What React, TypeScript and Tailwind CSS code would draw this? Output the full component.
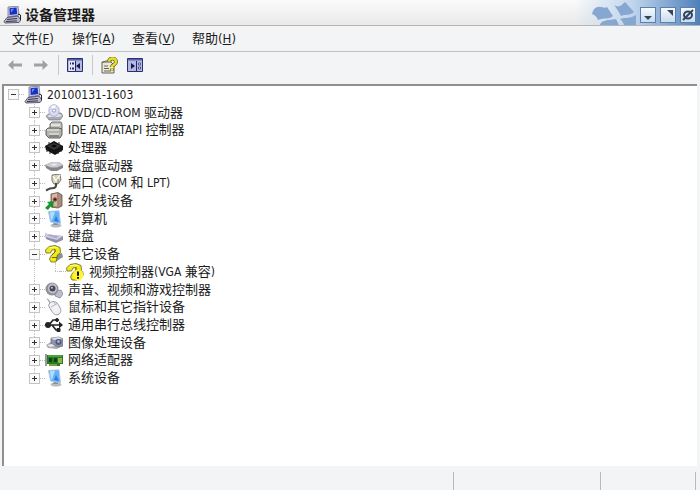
import { useState, type ReactNode } from "react";
import clsx from "clsx";

const ComputerIcon = () => (
  <>
    <path d="M5 1 15 0l1 9-11 2z" fill="#c9c7dc" stroke="#77758f" strokeWidth=".8" />
    <path d="m6.500 2.200 7-.6.7 6.400-7.500 1z" fill="#1632c4" />
    <path d="m8 3 3-.2-3 4z" fill="#6d8cf2" />
    <path d="M4 11.500 15 10l3 4-2 2.500-14 .5-1-1.500z" fill="#b9b7cc" stroke="#3c3a52" strokeWidth=".8" />
    <path d="M4 13.500 14 12.500M3 15.500l11-.6" stroke="#34324a" strokeWidth="1" />
    <path d="m15 8 2.500 1v5" fill="none" stroke="#222" strokeWidth="1" />
  </>
);

const MonitorIcon = () => (
  <>
    <ellipse cx="11" cy="15.5" rx="5.5" ry="2" fill="#b8bac2" />
    <path d="M9 12h4v3H8z" fill="#8c909c" />
    <path d="M3.500 1.500 14 .8l1.500 12.700-10-1.500z" fill="#64b1f6" stroke="#b0c7e4" strokeWidth="1" />
    <path d="M5 2.200 10 2 7 10l-1 .5z" fill="#b1e0ff" />
    <path d="m11 6 3 6-5-1z" fill="#2c7ae4" />
  </>
);

const QuestionIcon = ({ warning }: { warning?: boolean }) => (
  <>
    <path d="m11 9 6-1 1 4-6 4h-3z" fill="#8f8f8f" />
    <path
      d="M1 8 .5 5 4 1.500 10 .5l5 2 .5 5-3.500 3v2l-1 4.500H6l-1.500-3 2-4L10 7V4.500L7 5 5.500 8z"
      fill="#f1ea1a"
      stroke="#6b670c"
      strokeWidth=".8"
    />
    <path d="M7 12.500h5M10 4.500V7l-3 3" fill="none" stroke="#6b670c" />
    <path d="m4 3 5-1 4 1" fill="none" stroke="#fffba0" />
    {warning && (
      <>
        <circle cx="12" cy="12" r="5.4" fill="#fff52a" />
        <path d="M12 8.500v4.300M12 14v1.800" stroke="#111" strokeWidth="2" />
      </>
    )}
  </>
);

const icons: Record<string, ReactNode> = {
  computer: <ComputerIcon />,
  monitor: <MonitorIcon />,
  question: <QuestionIcon />,
  warning: <QuestionIcon warning />,
  disc: (
    <>
      <path d="m1 12 4-3h11l2 3-3 4H4z" fill="#a9a9b6" stroke="#777785" strokeWidth=".7" />
      <path d="m2 12 4-2h9l2 2-3 1H4z" fill="#dedee6" />
      <ellipse cx="9" cy="6.5" rx="5.2" ry="5.8" fill="#dadbf2" stroke="#a5a5c4" strokeWidth=".8" />
      <path d="M9 6.500 6 2l5-.8z" fill="#fff" />
      <circle cx="9" cy="6.5" r="1.6" fill="#fff" stroke="#8887b8" strokeWidth=".8" />
    </>
  ),
  ide: (
    <>
      <path d="m5 3 2-2h9l1 2v5l-2 2H5z" fill="#c4c4be" stroke="#62625e" strokeWidth=".9" />
      <path d="M6 4h9" stroke="#fff" />
      <path d="m1 9 2-2h11l3 1v6l-2 3H4l-3-3z" fill="#b3b3ad" stroke="#50504c" strokeWidth=".9" />
      <path d="M2 9h12M4 13h10" stroke="#f2f2ed" strokeWidth="1.2" />
      <path d="M4 15h10" stroke="#55554f" />
    </>
  ),
  chip: (
    <>
      <path d="m0 7 9-5 9 5v4l-8 5-9-5z" fill="#141414" />
      <path d="m2 7 7-3 7 3-7 4z" fill="#363636" />
      <path d="m6 7 3-1.400L12 7 9 8.600z" fill="#070707" />
      <path d="M2 10v3m3-1v3m8-3v3m3-5v3M4 5V3m10 2V3" stroke="#222" />
    </>
  ),
  disk: (
    <>
      <path d="m0 8 7-3h7l4 3v3l-6 3H6l-5-3z" fill="#85858b" />
      <path d="m0 8 7-3h7l4 3-6 2.500H6z" fill="#c9c9ce" />
      <path d="m5 8 4-1.500 4 .5-4 2z" fill="#e9e9ed" />
    </>
  ),
  port: (
    <>
      <path d="m7 1 8-1 1 6-3 4H9L7 7z" fill="#dad6be" stroke="#6f6c5d" strokeWidth=".9" />
      <path d="m8 2 3 5M15 1l-4 6" stroke="#fff" strokeWidth="1.2" />
      <path d="M11 9v3c-1 4-5 1-7 3l-3 1.500" fill="none" stroke="#494949" strokeWidth="2" />
      <path d="M13 5v5" stroke="#83806e" />
    </>
  ),
  infrared: (
    <>
      <path d="m6 2 7-1.500L17 3v11l-4 2-7-1z" fill="#a58d7c" stroke="#5f5348" strokeWidth=".8" />
      <path d="m7 2.500 5-.9v12.700l-5-.5z" fill="#d6b9a3" />
      <circle cx="10" cy="7.5" r="2.2" fill="#a34a40" />
      <circle cx="10" cy="7.5" r="1" fill="#350f0e" />
      <path d="m0 16 4-4-2-2 7-1-1 7-2-2-3 4z" fill="#16962a" />
    </>
  ),
  keyboard: (
    <>
      <path d="m0 6 8 1 10 1v4l-7 3-10-4z" fill="#9291ad" />
      <path d="m0 5 7 2 11 1-6 4-11-3z" fill="#cbcbe2" />
      <path d="m3 7 9 3M5 7l8 2" stroke="#9d9dc0" strokeWidth=".8" />
    </>
  ),
  sound: (
    <>
      <path d="m11 10 5-1 2 4-3 4-5-2z" fill="#bcbccb" stroke="#85859b" strokeWidth=".8" />
      <ellipse cx="7" cy="8" rx="6.5" ry="6.5" fill="#8f8f9b" />
      <ellipse cx="7.5" cy="7.5" rx="4.5" ry="5" fill="#c5c5cf" />
      <circle cx="7.5" cy="7.5" r="3" fill="#484854" />
      <circle cx="7" cy="6.7" r="1" fill="#c4c4d1" />
    </>
  ),
  mouse: (
    <>
      <path d="M2 1c3 1 1 3 4 4" fill="none" stroke="#9999a5" strokeWidth="1.2" />
      <path d="M4 6c3-4 8-3 10 2 2 3 3 6 0 8-3 2-6 0-8-4-1-2-3-4-2-6z" fill="#f1f1f3" stroke="#9999a4" />
      <path d="m6 9 7-4M9 4l2 3" stroke="#b4b4bd" />
    </>
  ),
  usb: (
    <g fill="none" stroke="#252525" strokeWidth="1.7">
      <path d="M2 9h14M4 9l4-5h4M7 9l4 5h3" />
      <circle cx="3" cy="9" r="2.2" fill="#252525" />
      <path d="m14 5.500 4 3.500-4 3.500z" fill="#252525" stroke="none" />
      <circle cx="12" cy="4" r="1.5" fill="#252525" strokeWidth="1" />
      <path d="M12 12.500h3v3h-3z" fill="#252525" strokeWidth="1" />
    </g>
  ),
  camera: (
    <>
      <path d="m1 11 5-3 9 1 2 3-5 3-9-1z" fill="#a8a8b4" />
      <path d="m6 4 8-1 4 2v7l-4 1-8-3z" fill="#9292a5" stroke="#686879" strokeWidth=".7" />
      <path d="m6 4 8-1 3 2-8 1z" fill="#dadae4" />
      <circle cx="13.5" cy="8" r="3" fill="#4d5f7c" />
      <circle cx="13.5" cy="7.5" r="1.3" fill="#a6c5e8" />
      <path d="m2 11 5-1 3 2-5 1z" fill="#e7e7ed" />
    </>
  ),
  network: (
    <>
      <path d="M1 3v12" stroke="#777" strokeWidth="1.5" />
      <path d="M2 4h16v9h-3v2H4v-2H2z" fill="#247d20" />
      <path d="M3 5h14" stroke="#6fc562" />
      <path d="M4 7h3v4H4zm5 0h3v4H9z" fill="#153f18" />
      <path d="M13 7h4v5h-4z" fill="#8fb44d" />
      <path d="M5 13v2m2-2v2m2-2v2m2-2v2" stroke="#d8c64b" />
    </>
  ),
};

interface Device {
  icon: string;
  label: string;
  depth: number;
  open?: boolean;
  leaf?: boolean;
}

const devices: Device[] = [
  { icon: "computer", label: "20100131-1603", depth: 0, open: true },
  { icon: "disc", label: "DVD/CD-ROM 驱动器", depth: 1 },
  { icon: "ide", label: "IDE ATA/ATAPI 控制器", depth: 1 },
  { icon: "chip", label: "处理器", depth: 1 },
  { icon: "disk", label: "磁盘驱动器", depth: 1 },
  { icon: "port", label: "端口 (COM 和 LPT)", depth: 1 },
  { icon: "infrared", label: "红外线设备", depth: 1 },
  { icon: "monitor", label: "计算机", depth: 1 },
  { icon: "keyboard", label: "键盘", depth: 1 },
  { icon: "question", label: "其它设备", depth: 1, open: true },
  { icon: "warning", label: "视频控制器(VGA 兼容)", depth: 2, leaf: true },
  { icon: "sound", label: "声音、视频和游戏控制器", depth: 1 },
  { icon: "mouse", label: "鼠标和其它指针设备", depth: 1 },
  { icon: "usb", label: "通用串行总线控制器", depth: 1 },
  { icon: "camera", label: "图像处理设备", depth: 1 },
  { icon: "network", label: "网络适配器", depth: 1 },
  { icon: "monitor", label: "系统设备", depth: 1 },
];

const menus = [
  { label: "文件", hotkey: "F" },
  { label: "操作", hotkey: "A" },
  { label: "查看", hotkey: "V" },
  { label: "帮助", hotkey: "H" },
];

// Latin runs are set one size smaller than the Chinese text
const Label = ({ text }: { text: string }) => (
  <span className="whitespace-pre text-[13px]">
    {text.split(/([ -~]+)/).map((part, i) =>
      i % 2 ? (
        <span key={i} className="text-xs">
          {part}
        </span>
      ) : (
        part
      )
    )}
  </span>
);

const DeviceRow = ({ device, last }: { device: Device; last: boolean }) => {
  const [open, setOpen] = useState(!!device.open);
  const { icon, label, depth, leaf } = device;

  return (
    <li
      role="treeitem"
      aria-level={depth + 1}
      aria-expanded={leaf ? undefined : open}
      className="flex min-h-0 items-center"
    >
      {depth > 0 && <span className="w-[21px] shrink-0" />}
      {depth > 1 && (
        <span className="flex w-[21px] shrink-0 self-stretch pl-[5px]">
          <span className="border-l border-dotted border-[#c8c8c8]" />
        </span>
      )}
      <span className="flex w-[10px] shrink-0 flex-col items-center self-stretch">
        <span className={clsx("w-px flex-1", depth > 0 && "border-l border-dotted border-[#c8c8c8]")} />
        {leaf ? (
          <span className="ml-[5px] w-[5px] border-t border-dotted border-[#bbb]" />
        ) : (
          <button
            type="button"
            aria-label={label}
            onClick={() => setOpen(!open)}
            className="flex size-[11px] shrink-0 items-center justify-center border border-[#c4c4c4] bg-[#fafafa]"
          >
            <svg viewBox="0 0 7 7" className="size-[7px] shrink-0" stroke="#333">
              <path d={open ? "M1 3.500h5" : "M1 3.500h5M3.500 1v5"} />
            </svg>
          </button>
        )}
        <span
          className={clsx("w-px flex-1", depth === 1 && !last && "border-l border-dotted border-[#c8c8c8]")}
        />
      </span>
      <span className="w-[6px] shrink-0 border-t border-dotted border-[#bbb]" />
      <svg viewBox="0 0 18 18" className="size-[18px] shrink-0">
        {icons[icon]}
      </svg>
      <span className="ml-[5px] flex items-center leading-4">
        <Label text={label} />
      </span>
    </li>
  );
};

const PanelIcon = ({ flip }: { flip?: boolean }) => (
  <svg viewBox="0 0 16 14" className="h-[14px] w-4">
    <path d="M.5.5h15v13H.5z" fill="#b4b9e2" stroke="#2b2f70" />
    <path d="M1 1h14v1.500H1z" fill="#5a60ab" />
    {flip ? (
      <>
        <path d="M9.500 3v10" stroke="#222663" />
        <path d="M4 5v6l4-3z" fill="#15194e" />
        <path d="M11.500 5h2v2h-2zm0 4h2v2h-2z" fill="#fff" stroke="#34398c" strokeWidth=".8" />
      </>
    ) : (
      <>
        <path d="M8.500 3v10" stroke="#222663" />
        <path d="M13 5v6l-4-3z" fill="#15194e" />
        <path d="M2 3h6v10H2z" fill="#e4e6f6" />
        <path d="M3 5.500h1m1 0h2M3 10.500h1m1 0h2" stroke="#22276c" strokeWidth="2" />
      </>
    )}
  </svg>
);

const ArrowIcon = ({ right }: { right?: boolean }) => (
  <svg viewBox="0 0 14 10" className="h-[10px] w-[14px]">
    <path
      d={right ? "M14 5 8.500 0v3.500H0v3h8.500V10z" : "M0 5 5.500 0v3.500H14v3H5.500V10z"}
      fill="#a1a1a1"
    />
  </svg>
);

const captionButton =
  "flex size-4 items-center justify-center border border-[#5b7fae] bg-linear-to-b from-[#f7fafd] to-[#c8dbef]";

const TitleBar = () => (
  <header className="flex h-[26px] shrink-0 items-center border-b border-[#b5b5b5] bg-linear-to-b from-[#fbfbfb] to-[#e9e9e9]">
    <svg viewBox="0 0 18 18" className="ml-[3px] mt-1 size-[18px] shrink-0">
      <ComputerIcon />
    </svg>
    <h1 className="ml-1 mt-1 flex-1 text-sm font-bold leading-5">设备管理器</h1>
    <div className="flex h-full items-center bg-linear-to-r from-transparent via-[#c3d8ee] via-45% to-[#4e80b8] pr-1">
      <svg viewBox="0 0 62 25" className="h-[25px] w-[62px]" fill="#86a7d1">
        <path d="M18 14c1-4 3-7 6-7 4-1 6 2 9 0l6 9c-4 4-9 1-15 4-1-3-3-5-6-6z" />
        <path d="M40 5c5 3 7 1 11-3l9 10c-4 4-9 2-13 4-2-4-4-7-7-11z" />
        <path d="M26 25c1-4 4-4 8-5 4 0 6-1 8-1l3 6z" />
        <path d="M46 19c5-2 10 0 16-4v10H50c-1-3-2-4-4-6z" />
      </svg>
      <div className="mt-1 flex gap-1 pl-1">
        <button type="button" aria-label="最小化" className={captionButton}>
          <svg viewBox="0 0 14 14" className="size-[14px]">
            <path d="M3 8h8l-4 4z" fill="#31455f" />
          </svg>
        </button>
        <button type="button" aria-label="最大化" className={captionButton}>
          <svg viewBox="0 0 14 14" className="size-[14px]">
            <path d="M6 2h6v6z" fill="#31455f" />
          </svg>
        </button>
        <button type="button" aria-label="关闭" className={captionButton}>
          <svg viewBox="0 0 14 14" className="size-[14px]" fill="none" stroke="#31455f" strokeWidth="2">
            <ellipse cx="7" cy="7" rx="4" ry="3.5" />
            <path d="M2 12 12 2" />
          </svg>
        </button>
      </div>
    </div>
  </header>
);

export default function App() {
  return (
    <div className="flex min-h-screen flex-col bg-[#f3f4f5] font-['DejaVu_Sans_Condensed','Noto_Sans_CJK_SC',sans-serif] text-[#1c1c1c]">
      <TitleBar />
      <nav className="flex h-[26px] shrink-0 items-center border-b border-[#c2c2c2] pl-3">
        {menus.map(({ label, hotkey }) => (
          <button key={hotkey} type="button" className="w-[60px] text-left text-[13px] leading-4">
            {label}
            <span className="text-[13px]">
              (<u>{hotkey}</u>)
            </span>
          </button>
        ))}
      </nav>
      <div role="toolbar" className="flex h-8 shrink-0 items-center pb-[6px] pl-2">
        <button type="button" aria-label="后退">
          <ArrowIcon />
        </button>
        <button type="button" aria-label="前进" className="ml-3">
          <ArrowIcon right />
        </button>
        <span className="ml-[10px] h-5 w-px bg-[#c8c8c8]" />
        <button type="button" aria-label="显示/隐藏控制台树" className="ml-2">
          <PanelIcon />
        </button>
        <span className="ml-[9px] h-5 w-px bg-[#c8c8c8]" />
        <button type="button" aria-label="帮助" className="ml-2">
          <svg viewBox="0 0 17 17" className="size-[17px]">
            <path d="M1 5h9l3 3v8H1z" fill="#e9e8d8" stroke="#66645a" />
            <path d="M1 5.500 5 4h6M3 9h4M3 11.500h5M3 14h7" fill="none" stroke="#66645a" />
            <path d="M8 4.500C8 .5 15 .5 15 5c0 3-4 2.500-4 5M11 11.500v2" fill="none" stroke="#6b6920" strokeWidth="4" />
            <path d="M8 4.500C8 .5 15 .5 15 5c0 3-4 2.500-4 5M11 11.500v2" fill="none" stroke="#e9df28" strokeWidth="2.4" />
          </svg>
        </button>
        <button type="button" aria-label="操作" className="ml-[9px]">
          <PanelIcon flip />
        </button>
      </div>
      <main className="ml-[2px] mr-[3px] flex-1 border-l-2 border-t-2 border-[#8f8f8f] bg-white pl-1">
        <ul role="tree" aria-label="设备" className="grid h-[301px] auto-rows-fr">
          {devices.map((device, i) => (
            <DeviceRow key={device.label} device={device} last={i === devices.length - 1} />
          ))}
        </ul>
      </main>
      <footer className="flex h-6 shrink-0 pr-1 pt-[6px]">
        <span className="flex-1 border-r border-[#b9b9b9]" />
        <span className="w-[147px] border-r border-[#b9b9b9]" />
        <span className="w-[95px] border-r border-[#b9b9b9]" />
      </footer>
    </div>
  );
}
